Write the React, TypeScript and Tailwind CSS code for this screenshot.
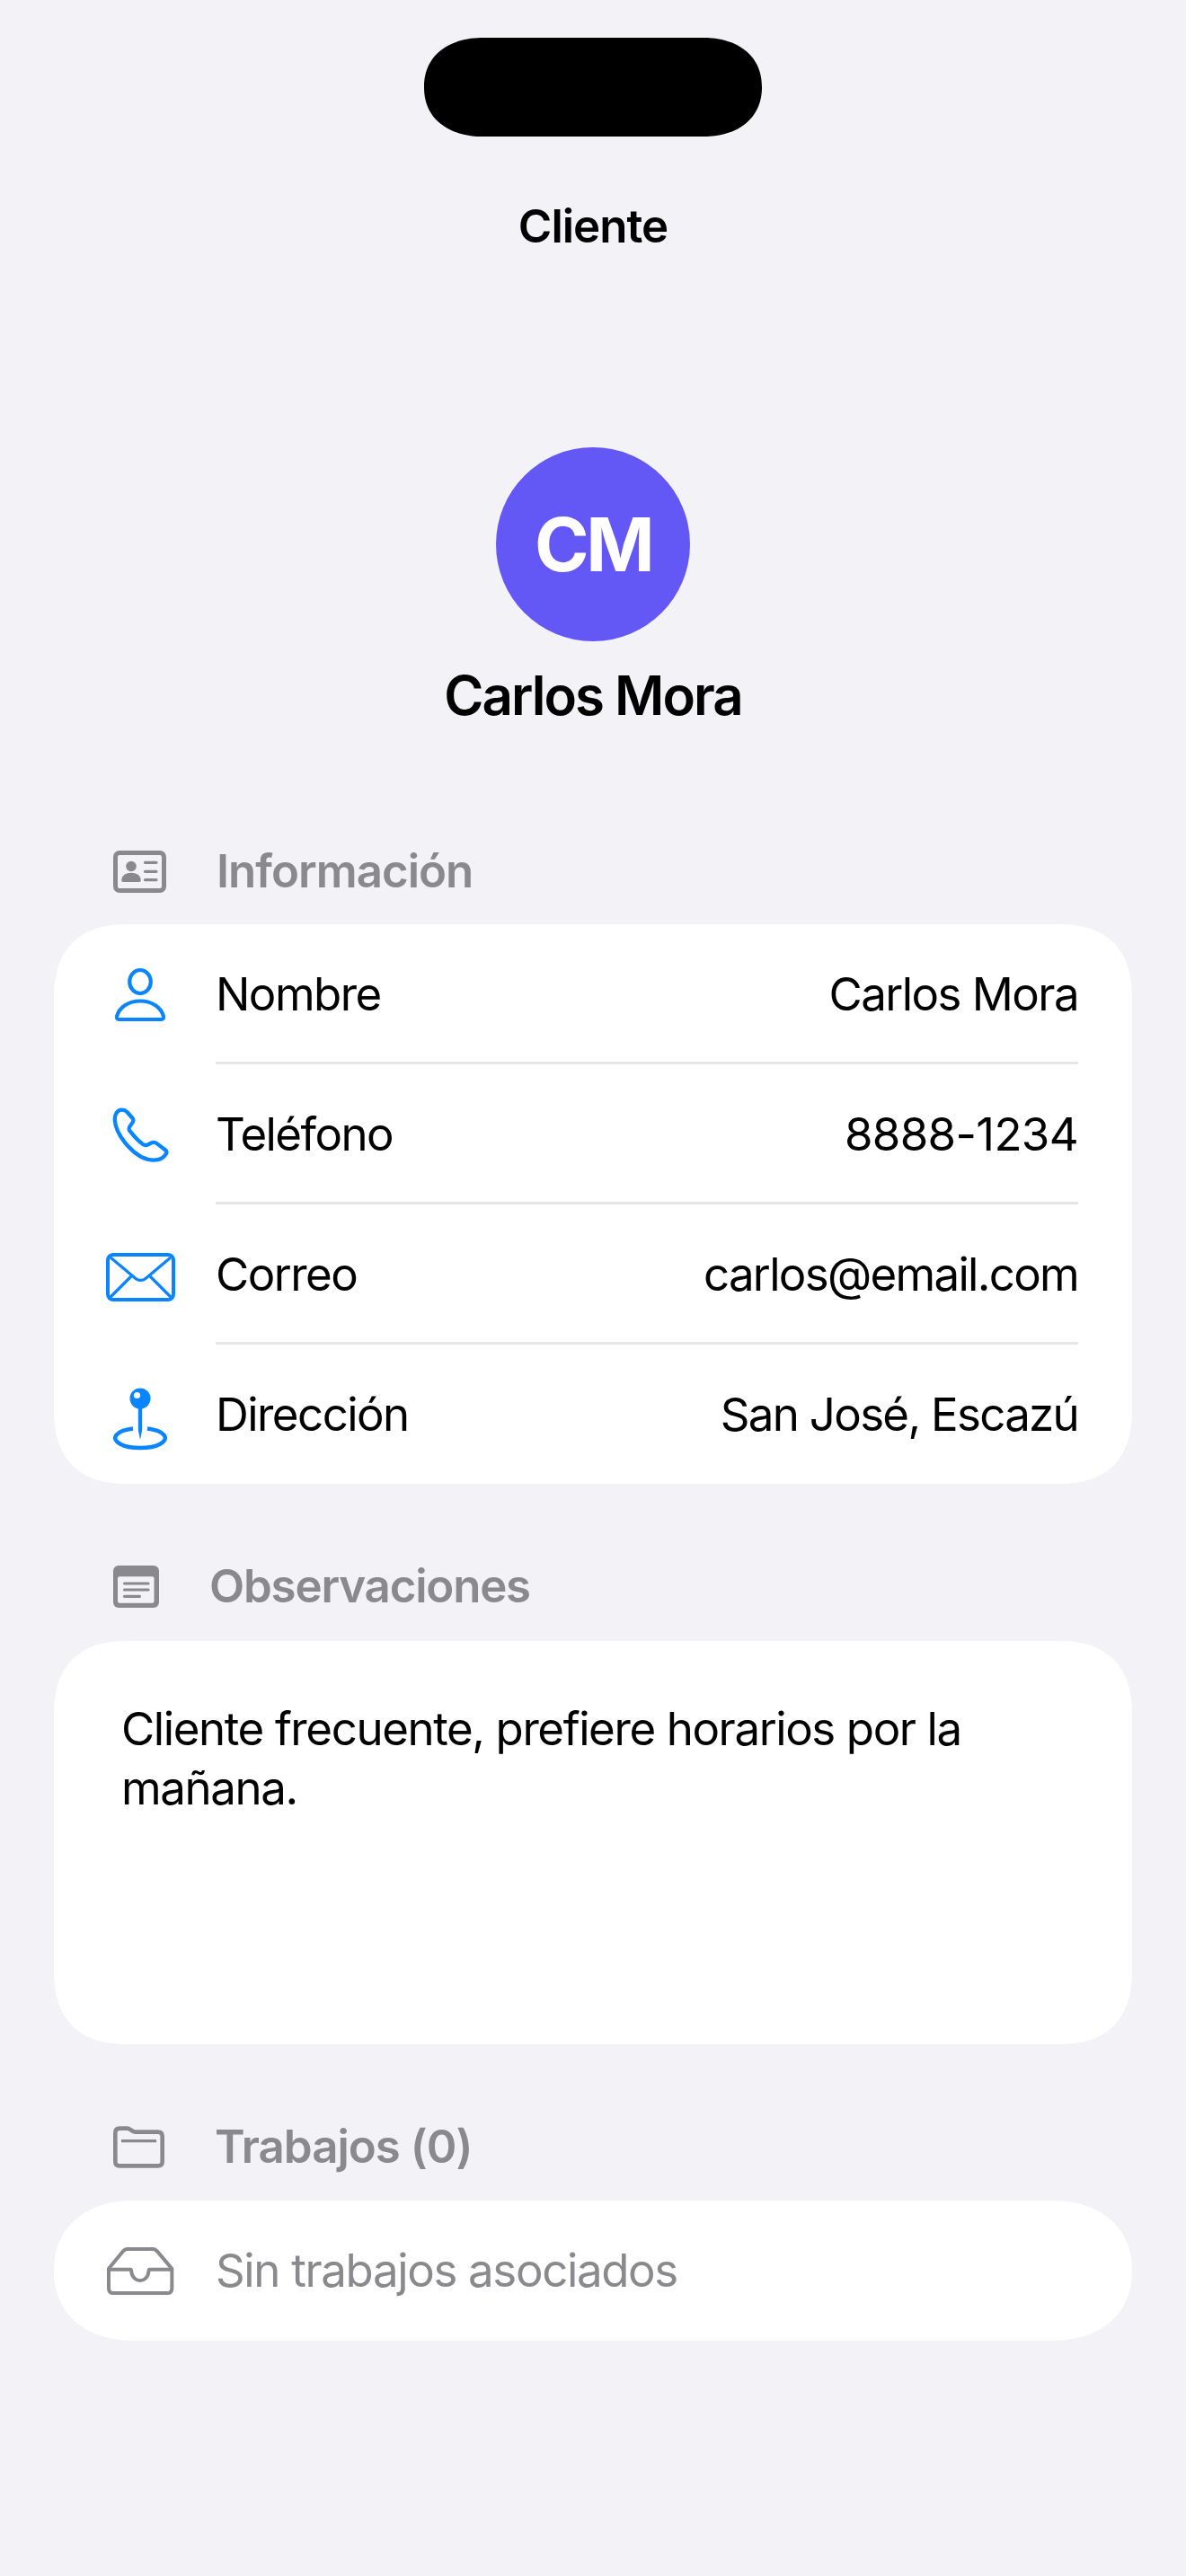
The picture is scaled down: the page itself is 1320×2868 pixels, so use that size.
import React from 'react';

const BLUE = '#0a84ff';
const GRAY = '#8a8a8e';

const UserIcon = () => (
  <svg width="58" height="61" viewBox="0 0 58 61" fill="none" stroke={BLUE} strokeWidth="4.2">
    <ellipse cx="29" cy="16" rx="11.8" ry="13" />
    <path d="M5.5 58 C3.5 58 2.6 56.6 3 54.8 C5.5 44.5 16 37.5 29 37.5 C42 37.5 52.5 44.5 55 54.8 C55.4 56.6 54.5 58 52.5 58 Z" />
  </svg>
);

const PhoneIcon = () => (
  <svg width="65" height="63" viewBox="70 33 195 190" fill="none" stroke={BLUE} strokeWidth="13" strokeLinejoin="round">
    <path d="M105 44 C90 44 80 58 81 78 C84 130 150 213 212 213 C232 213 247 203 254 190 C256 184 253 180 247 176 L222 157 C214 151 206 153 198 158 C190 163 184 166 176 160 C155 146 143 130 130 113 C126 106 130 100 136 93 C142 86 146 80 141 73 L122 51 C116 45 111 44 105 44 Z" />
  </svg>
);

const MailIcon = () => (
  <svg width="77" height="54" viewBox="0 0 77 54" fill="none" stroke={BLUE}>
    <rect x="2" y="2" width="73" height="50" rx="6" strokeWidth="4" />
    <path d="M5 5 L33 28.5 C36 31 41 31 44 28.5 L72 5" strokeWidth="3.2" />
    <path d="M4.5 49.5 L28 26 M72.5 49.5 L49 26" strokeWidth="3.2" />
  </svg>
);

const PinIcon = () => (
  <svg width="60" height="70" viewBox="0 0 60 70" fill="none">
    <circle cx="30" cy="12" r="11.5" fill={BLUE} />
    <circle cx="26.5" cy="8.5" r="3.6" fill="#ffffff" />
    <path d="M27.8 20 H32.2 V47 L30 58 L27.8 47 Z" fill={BLUE} />
    <path d="M22 45.5 A27.8 11 0 1 0 38 45.5" stroke={BLUE} strokeWidth="4.5" />
  </svg>
);

const CardIcon = () => (
  <svg width="59" height="47" viewBox="0 0 59 47" fill="none">
    <rect x="2.5" y="2.5" width="54" height="42" rx="4.5" stroke={GRAY} strokeWidth="5" />
    <circle cx="20" cy="17.5" r="5.8" fill={GRAY} />
    <path d="M9.3 33 C9.5 27.5 14 24.8 20 24.8 C26 24.8 30.5 27.5 30.7 33 C30.7 34.4 30 35 28.8 35 H11.2 C10 35 9.3 34.4 9.3 33 Z" fill={GRAY} />
    <path d="M35.5 13.3 H48 M35.5 23.3 H48 M35.5 32.7 H48" stroke={GRAY} strokeWidth="3.2" strokeLinecap="round" />
  </svg>
);

const NoteIcon = () => (
  <svg width="51" height="47" viewBox="0 0 51 47" fill="none">
    <rect width="51" height="47" rx="6" fill={GRAY} />
    <rect x="5" y="12.3" width="40.5" height="29.5" rx="2" fill="#f2f2f7" />
    <path d="M12.5 20 H39 M12.5 27 H39 M12.5 34.3 H29.5" stroke={GRAY} strokeWidth="3.2" strokeLinecap="round" />
  </svg>
);

const FolderIcon = () => (
  <svg width="57" height="47" viewBox="258 78 172 140" fill="none" stroke={GRAY} strokeLinejoin="round">
    <path d="M265 100 C265 90 270 85 280 85 L305 85 C315 85 320 97 332 97 L408 97 C418 97 423 102 423 112 L423 196 C423 206 418 211 408 211 L280 211 C270 211 265 206 265 196 Z" strokeWidth="14" />
    <path d="M285 127 L403 127" strokeWidth="10" />
  </svg>
);

const InboxIcon = () => (
  <svg width="78" height="57" viewBox="230 478 235 170" fill="none" stroke={GRAY} strokeWidth="12" strokeLinejoin="round">
    <path d="M242 555 L242 620 C242 632 248 637 258 637 L438 637 C448 637 454 632 454 620 L454 555 L405 497 C400 491 396 489 390 489 L305 489 C298 489 294 491 290 497 Z" />
    <path d="M242 558 L315 558 C318 558 318 560 318 565 C320 585 335 595 347 595 C360 595 374 585 376 565 C376 560 377 558 380 558 L454 558" />
  </svg>
);

const rows = [
  { label: 'Nombre', value: 'Carlos Mora', icon: <UserIcon />, iconClass: '', valueClass: '' },
  { label: 'Teléfono', value: '8888-1234', icon: <PhoneIcon />, iconClass: '', valueClass: 'tracking-[-0.65px]' },
  { label: 'Correo', value: 'carlos@email.com', icon: <MailIcon />, iconClass: 'pt-[6px]', valueClass: 'tracking-[-1.7px]' },
  { label: 'Dirección', value: 'San José, Escazú', icon: <PinIcon />, iconClass: 'pt-[10px]', valueClass: 'tracking-[-1.7px]' },
];

export default function App() {
  return (
    <div className="min-h-[2868px] bg-[#f2f2f7] font-['Inter','Noto_Sans',sans-serif] text-[51px] tracking-[-1.55px] text-black">
      {/* Status / nav */}
      <div className="flex flex-col items-center pt-[42px]">
        <div className="h-[110px] w-[376px] rounded-[66px/55px] bg-black [corner-shape:superellipse(1.15)]" />
        <h1 className="mt-[69px] text-[51px] leading-[62px] font-semibold tracking-[-1px]">Cliente</h1>
      </div>

      {/* Avatar */}
      <div className="mt-[215px] flex flex-col items-center">
        <div className="flex h-[216px] w-[216px] items-center justify-center rounded-full bg-[#6358f6] text-[82px] font-bold tracking-[-3.5px] text-white">
          CM
        </div>
        <div className="mt-[24px] text-[60px] leading-[72px] font-semibold tracking-[-2px]">Carlos Mora</div>
      </div>

      {/* Información */}
      <div className="mt-[130px] mb-[29px] flex h-[60px] items-center gap-14 pl-[126px] font-semibold tracking-[-1px] text-[#8a8a8e]">
        <CardIcon />
        <span>Información</span>
      </div>
      <div className="mx-[60px] rounded-[84px] bg-white [corner-shape:superellipse(1.3)]">
        {rows.map((r, i) => (
          <div key={r.label} className={`flex ${i < 3 ? 'h-[156px]' : 'h-[155px]'}`}>
            <div className={`flex w-[180px] items-center justify-center pl-[12px] ${r.iconClass}`}>{r.icon}</div>
            <div className={`mr-[60px] flex flex-1 items-center justify-between border-b-[3px] pt-[4px] ${i < 3 ? 'border-[#e6e6e8]' : 'border-transparent'}`}>
              <span>{r.label}</span>
              <span className={r.valueClass}>{r.value}</span>
            </div>
          </div>
        ))}
      </div>

      {/* Observaciones */}
      <div className="mt-[84px] mb-[31px] flex h-[60px] items-center gap-14 pl-[126px] font-semibold tracking-[-1.2px] text-[#8a8a8e]">
        <NoteIcon />
        <span>Observaciones</span>
      </div>
      <div className="mx-[60px] h-[449px] rounded-[84px] bg-white px-[75px] pt-[65px] leading-[66px] tracking-[-1.4px] [corner-shape:superellipse(1.3)]">
        Cliente frecuente, prefiere horarios por la mañana.
      </div>

      {/* Trabajos */}
      <div className="mt-[84px] mb-[30px] flex h-[60px] items-center gap-14 pl-[126px] font-semibold tracking-[-1px] text-[#8a8a8e]">
        <FolderIcon />
        <span>Trabajos (0)</span>
      </div>
      <div className="mx-[60px] flex h-[156px] items-center rounded-[90px/78px] bg-white tracking-[-1.35px] text-[#8a8a8e] [corner-shape:superellipse(1.15)]">
        <div className="flex w-[180px] items-center justify-center pl-[12px]">
          <InboxIcon />
        </div>
        <span>Sin trabajos asociados</span>
      </div>
    </div>
  );
}
